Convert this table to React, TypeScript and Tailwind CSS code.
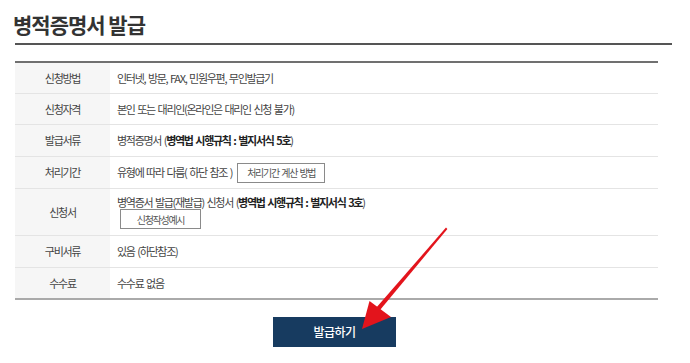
import React from "react";

const font = { fontFamily: '"Noto Sans CJK KR", "Noto Sans", sans-serif' };

function Row({
  label,
  h,
  last,
  children,
}: {
  label: string;
  h: string;
  last?: boolean;
  children: React.ReactNode;
}) {
  return (
    <div className={`grid grid-cols-[95px_1fr] ${h} ${last ? "" : "border-b border-[#e4e4e4]"}`}>
      <div className="flex items-center justify-center bg-[#f6f6f6] text-[#444]">{label}</div>
      <div className="flex items-center pl-[7px] text-[#444]">{children}</div>
    </div>
  );
}

function SmallButton({ children }: { children: React.ReactNode }) {
  return (
    <span className="inline-flex h-[20px] items-center justify-center border border-[#8a8a8a] bg-white px-[9px] text-[10px] text-[#555]">
      {children}
    </span>
  );
}

export default function App() {
  return (
    <div className="relative h-[363px] w-[690px] overflow-hidden bg-white" style={font}>
      <div className="pl-[15px]">
        <div className="w-[657px] border-b-2 border-[#555] pb-[5px] pt-[10px]">
          <h1 className="-ml-[2px] text-[21px] font-bold leading-[28px] tracking-[-1px] text-[#333]">
            병적증명서 발급
          </h1>
        </div>

        <div className="mt-[16px] w-[643px] border-b-2 border-t-2 border-b-[#aaa] border-t-[#707070] text-[11px] tracking-[-1.3px] [word-spacing:1.5px]">
          <Row label="신청방법" h="h-[31px]">
            인터넷, 방문, FAX, 민원우편, 무인발급기
          </Row>
          <Row label="신청자격" h="h-[31px]">
            본인 또는 대리인(온라인은 대리인 신청 불가)
          </Row>
          <Row label="발급서류" h="h-[32px]">
            <span>
              병적증명서 (<b className="font-bold text-[#222]">병역법 시행규칙 : 별지서식 5호</b>)
            </span>
          </Row>
          <Row label="처리기간" h="h-[32px]">
            <span className="mr-[5px]">유형에 따라 다름( 하단 참조 )</span>
            <SmallButton>처리기간 계산 방법</SmallButton>
          </Row>
          <div className="grid h-[47px] grid-cols-[95px_1fr] border-b border-[#e4e4e4]">
            <div className="flex items-center justify-center bg-[#f6f6f6] text-[#444]">신청서</div>
            <div className="flex flex-col items-start pl-[7px] pt-[7px] text-[#444]">
              <span className="leading-[13px]">
                병역증서 발급(재발급) 신청서 (<b className="font-bold text-[#222]">병역법 시행규칙 : 별지서식 3호</b>)
              </span>
              <span className="ml-[3px]">
                <span className="inline-flex h-[20px] w-[81px] items-center justify-center border border-[#8a8a8a] bg-white text-[10px] text-[#555]">
                  신청작성예시
                </span>
              </span>
            </div>
          </div>
          <Row label="구비서류" h="h-[32px]">
            있음 (하단참조)
          </Row>
          <Row label="수수료" h="h-[30px]" last>
            수수료 없음
          </Row>
        </div>

        <button className="ml-[258px] mt-[17px] flex h-[30px] w-[123px] items-center justify-center bg-[#173b60] text-[12px] font-medium tracking-[-0.5px] text-white">
          발급하기
        </button>
      </div>

      {/* red pointer arrow over the button */}
      <svg className="pointer-events-none absolute left-0 top-0" width="690" height="363" viewBox="0 0 690 363">
        <polygon points="447.4,229 446,227.6 376.4,307.6 379.6,310.4" fill="#e3141c" />
        <polygon points="362,329 369.5,301 391,317" fill="#e3141c" />
      </svg>
    </div>
  );
}
